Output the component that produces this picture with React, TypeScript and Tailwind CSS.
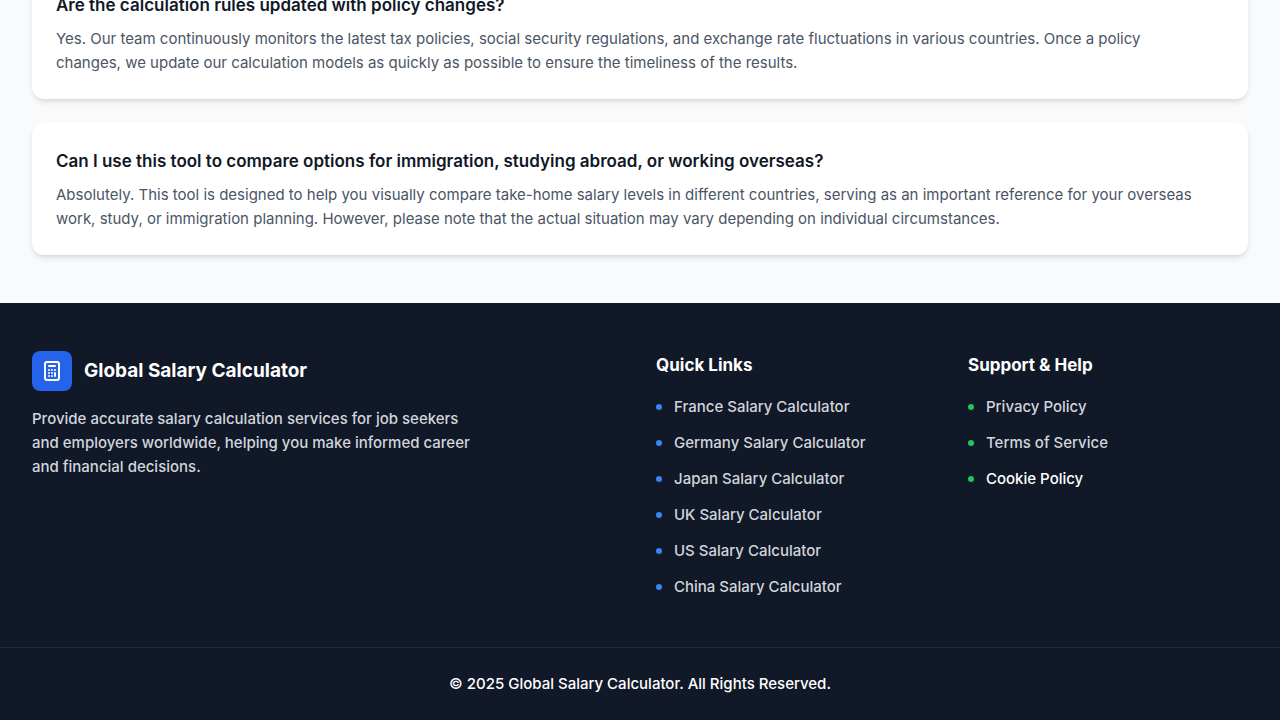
interface FaqItem {
  question: string;
  answer: string;
}

interface FooterLink {
  label: string;
  href: string;
  active?: boolean;
}

interface FooterLinksProps {
  title: string;
  links: FooterLink[];
  dotClass: string;
}

const faqs: FaqItem[] = [
  {
    question: "Are the calculation rules updated with policy changes?",
    answer:
      "Yes. Our team continuously monitors the latest tax policies, social security regulations, and exchange rate fluctuations in various countries. Once a policy changes, we update our calculation models as quickly as possible to ensure the timeliness of the results.",
  },
  {
    question:
      "Can I use this tool to compare options for immigration, studying abroad, or working overseas?",
    answer:
      "Absolutely. This tool is designed to help you visually compare take-home salary levels in different countries, serving as an important reference for your overseas work, study, or immigration planning. However, please note that the actual situation may vary depending on individual circumstances.",
  },
];

const quickLinks: FooterLink[] = [
  { label: "France Salary Calculator", href: "#france" },
  { label: "Germany Salary Calculator", href: "#germany" },
  { label: "Japan Salary Calculator", href: "#japan" },
  { label: "UK Salary Calculator", href: "#uk" },
  { label: "US Salary Calculator", href: "#us" },
  { label: "China Salary Calculator", href: "#china" },
];

const supportLinks: FooterLink[] = [
  { label: "Privacy Policy", href: "#privacy" },
  { label: "Terms of Service", href: "#terms" },
  { label: "Cookie Policy", href: "#cookies", active: true },
];

function CalculatorIcon() {
  return (
    <svg
      className="size-6 text-white"
      fill="none"
      stroke="currentColor"
      strokeWidth={2}
      strokeLinecap="round"
      strokeLinejoin="round"
      viewBox="0 0 24 24"
      aria-hidden="true"
    >
      <path d="M9 7h6m0 10v-3m-3 3h.01M9 17h.01M9 14h.01M12 14h.01M15 11h.01M12 11h.01M9 11h.01M7 21h10a2 2 0 002-2V5a2 2 0 00-2-2H7a2 2 0 00-2 2v14a2 2 0 002 2z" />
    </svg>
  );
}

function FooterLinks({ title, links, dotClass }: FooterLinksProps) {
  return (
    <nav aria-label={title}>
      <h3 className="mb-4 text-[17px] leading-7 font-bold text-white">{title}</h3>
      <ul className="space-y-3">
        {links.map((link) => (
          <li key={link.href}>
            <a
              href={link.href}
              className={`flex items-center gap-3 transition-colors hover:text-white ${
                link.active ? "text-white" : "text-gray-300"
              }`}
            >
              <span className={`size-1.5 rounded-full ${dotClass}`} />
              {link.label}
            </a>
          </li>
        ))}
      </ul>
    </nav>
  );
}

export default function App() {
  return (
    <div className="flex h-screen flex-col bg-[#f9fafc] font-['Inter',sans-serif] text-[15px] leading-6">
      {/* FAQ stays scrolled to its end, right above the footer */}
      <main className="flex min-h-0 flex-1 flex-col justify-end overflow-hidden px-8 pb-12">
        <div className="space-y-6">
          {faqs.map((faq) => (
            <section key={faq.question} className="rounded-xl bg-white p-6 shadow-md">
              <h3 className="mb-2 text-[17px] leading-7 font-semibold text-gray-900">
                {faq.question}
              </h3>
              <p className="pr-5 text-gray-600">{faq.answer}</p>
            </section>
          ))}
        </div>
      </main>

      <footer className="shrink-0 bg-[#111827] font-medium text-white">
        <div className="grid grid-cols-4 gap-8 px-8 py-12">
          <div className="col-span-2">
            <div className="mb-4 flex items-center gap-3">
              <div className="flex size-10 items-center justify-center rounded-lg bg-[#2563eb]">
                <CalculatorIcon />
              </div>
              <h2 className="text-[19px] leading-7 font-bold">Global Salary Calculator</h2>
            </div>
            <p className="max-w-md text-gray-300">
              Provide accurate salary calculation services for job seekers and employers worldwide,
              helping you make informed career and financial decisions.
            </p>
          </div>
          <FooterLinks title="Quick Links" links={quickLinks} dotClass="bg-[#3b82f6]" />
          <FooterLinks title="Support & Help" links={supportLinks} dotClass="bg-[#22c55e]" />
        </div>
        <div className="border-t border-[#1f2937] px-8 py-6 text-center">
          <p>© 2025 Global Salary Calculator. All Rights Reserved.</p>
        </div>
      </footer>
    </div>
  );
}
